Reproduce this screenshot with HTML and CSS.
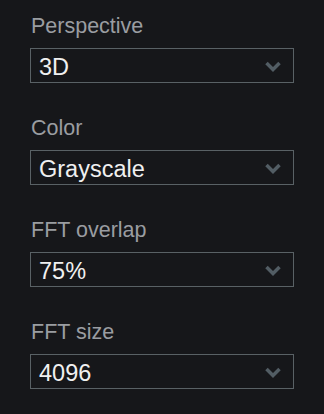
FILE: index.html
```html
<!doctype html>
<html>
<head>
    <meta charset="utf-8">
    <link rel="stylesheet" href="styles.css">
</head>
<body>

<div class="panel">

    <div class="field">
        <label>Perspective</label>
        <div class="select">
            <span class="value">3D</span>
            <svg class="chevron" width="16" height="11" viewBox="0 0 16 11"><polyline points="1.5,2 8,8.5 14.5,2"/></svg>
        </div>
    </div>

    <div class="field">
        <label>Color</label>
        <div class="select">
            <span class="value">Grayscale</span>
            <svg class="chevron" width="16" height="11" viewBox="0 0 16 11"><polyline points="1.5,2 8,8.5 14.5,2"/></svg>
        </div>
    </div>

    <div class="field">
        <label>FFT overlap</label>
        <div class="select">
            <span class="value">75%</span>
            <svg class="chevron" width="16" height="11" viewBox="0 0 16 11"><polyline points="1.5,2 8,8.5 14.5,2"/></svg>
        </div>
    </div>

    <div class="field">
        <label>FFT size</label>
        <div class="select">
            <span class="value">4096</span>
            <svg class="chevron" width="16" height="11" viewBox="0 0 16 11"><polyline points="1.5,2 8,8.5 14.5,2"/></svg>
        </div>
    </div>

</div>

</body>
</html>
```

FILE: styles.css
```css
html,
body {
    padding: 0;
    margin: 0;
    background-color: #16171a;
    font-family: "Liberation Sans", Arial, sans-serif;
}

.panel {
    padding: 14px 0 0 30px;
    width: 264px;
}

.field {
    margin-bottom: 33px;
}

label {
    display: block;
    font-size: 21.5px;
    line-height: 24px;
    color: #9a9da1;
    margin-bottom: 10px;
    padding-left: 1px;
}

.select {
    box-sizing: border-box;
    height: 35px;
    border: 1px solid #596165;
    padding: 4px 12px 0 8px;
    display: flex;
    align-items: flex-start;
}

.value {
    flex: 1;
    font-size: 23.5px;
    line-height: 29px;
    color: #f0f0f0;
}

.chevron {
    margin-top: 8px;
    fill: none;
    stroke: #525d64;
    stroke-width: 3.5;
}
```
